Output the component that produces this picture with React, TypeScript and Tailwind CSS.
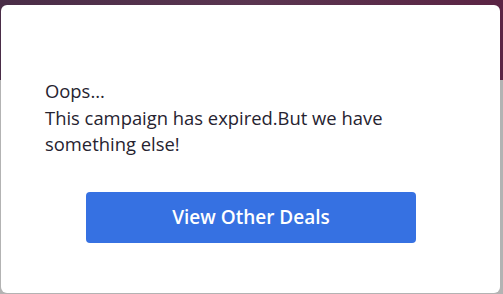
export default function App() {
  return (
    <div className="relative w-[503px] h-[294px] overflow-hidden bg-[#b3b3b3]">
      <div className="h-[80px] bg-gradient-to-r from-[#4a2d47] via-[#5a3550] to-[#5b2444]" />
      <div className="absolute left-[1px] top-[5px] w-[499px] h-[288px] rounded-[6px] bg-white pl-[44px] pt-[73px]">
        <p
          className="w-[400px] text-[18.4px] leading-[26.5px] text-[#262330]"
          style={{ fontFamily: '"Open Sans", sans-serif' }}
        >
          Oops...
          <br />
          This campaign has expired.But we have something else!
        </p>
        <div className="mt-[34px] pl-[41px]">
          <button
            className="w-[330px] h-[51px] rounded-[4px] bg-[#3671e2] text-white text-[19px] font-semibold"
            style={{ fontFamily: '"Open Sans", sans-serif' }}
          >
            View Other Deals
          </button>
        </div>
      </div>
    </div>
  );
}
